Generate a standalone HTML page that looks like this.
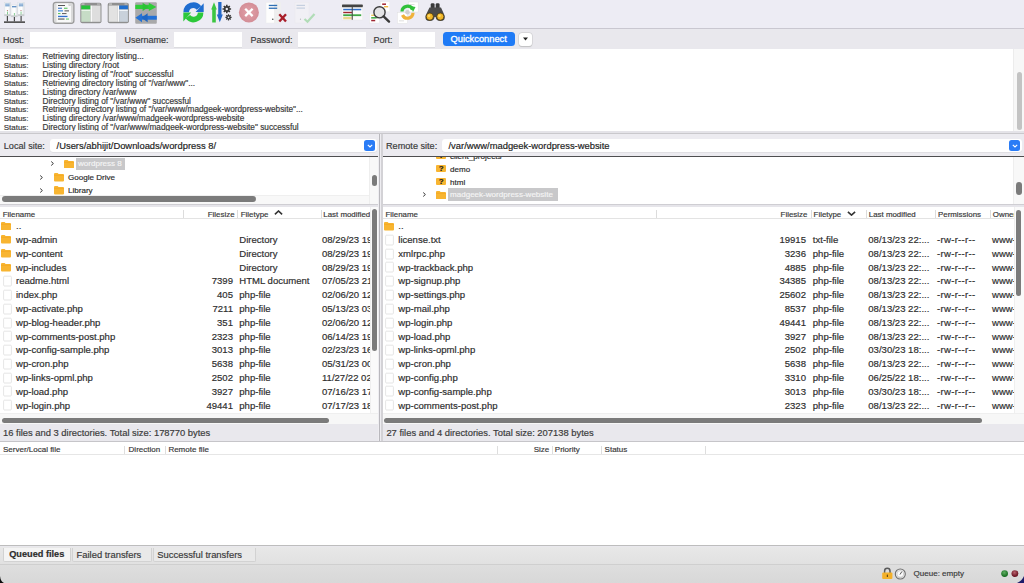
<!DOCTYPE html>
<html><head><meta charset="utf-8"><style>
*{margin:0;padding:0;box-sizing:border-box}
html,body{width:1024px;height:583px;overflow:hidden}
body{position:relative;background:#e9e8ed;font-family:"Liberation Sans",sans-serif;color:#333;}
.ab{position:absolute}
.t{position:absolute;white-space:nowrap;line-height:1;-webkit-text-stroke:.18px currentColor}
.ic{position:absolute}
</style></head><body>

<div class="ab" style="left:0;top:0;width:1024px;height:28px;background:#edecf4"></div>
<div class="ab" style="left:0;top:28px;width:1024px;height:1px;background:#c9c7d0"></div>
<svg class="ic" style="left:0;top:0" width="460" height="28" viewBox="0 0 460 28">
<defs>
<linearGradient id="tw" x1="0" y1="0" x2="1" y2="0"><stop offset="0" stop-color="#f4f6f8"/><stop offset=".6" stop-color="#ffffff"/><stop offset="1" stop-color="#d9dde2"/></linearGradient>
<linearGradient id="gr" x1="0" y1="0" x2="0" y2="1"><stop offset="0" stop-color="#a9a9ab"/><stop offset="1" stop-color="#8b8b8d"/></linearGradient>
<radialGradient id="cx" cx=".5" cy=".5" r=".5"><stop offset="0" stop-color="#e3a2aa"/><stop offset="1" stop-color="#d38d96"/></radialGradient>
</defs>
<!-- 1 site manager -->
<g>
 <rect x="4.2" y="2.5" width="6.4" height="13.5" fill="url(#tw)" stroke="#d5d9de" stroke-width=".4"/>
 <rect x="17.8" y="2.5" width="6.4" height="13.5" fill="url(#tw)" stroke="#d5d9de" stroke-width=".4"/>
 <rect x="11" y="5" width="6.4" height="12" fill="url(#tw)" stroke="#d5d9de" stroke-width=".4"/>
 <rect x="5.2" y="3.6" width="4.4" height="1" fill="#5b8fc5"/><rect x="5.2" y="5.3" width="4.4" height="1" fill="#5b8fc5"/>
 <rect x="18.8" y="3.6" width="4.4" height="1" fill="#5b8fc5"/><rect x="18.8" y="5.3" width="4.4" height="1" fill="#5b8fc5"/>
 <rect x="12" y="6.2" width="4.4" height="1.1" fill="#3f78b8"/>
 <circle cx="7.4" cy="10.5" r=".5" fill="#a05050"/><circle cx="21" cy="10.5" r=".5" fill="#a05050"/>
 <rect x="4.3" y="14.2" width="6.2" height="1.8" fill="#c9cccf"/><rect x="17.9" y="14.2" width="6.2" height="1.8" fill="#c9cccf"/><rect x="11.1" y="15.3" width="6.2" height="1.7" fill="#c9cccf"/>
 <rect x="7" y="11.5" width=".9" height="3" fill="#7cc68a"/><rect x="20.6" y="11.5" width=".9" height="3" fill="#7cc68a"/><rect x="13.9" y="13" width=".9" height="2.5" fill="#7cc68a"/>
 <rect x="6.8" y="16" width="1.2" height="5.5" fill="#4a4a4a"/><rect x="13.8" y="17" width="1.2" height="4.5" fill="#4a4a4a"/><rect x="20.5" y="16" width="1.2" height="5.5" fill="#4a4a4a"/>
 <rect x="4" y="21.3" width="21" height="1.7" fill="#555"/>
</g>
<!-- 2 message log -->
<g>
 <rect x="53.3" y="2.3" width="20.6" height="21" rx="2.5" fill="#dadada" stroke="#9b9b9b" stroke-width="1.3"/>
 <path d="M56.5 3.5H68.5L71 6V22H56.5Z" fill="#f8f8f8"/><path d="M68.5 3.5V6H71Z" fill="#cfcfcf"/>
 <rect x="58" y="5" width="7" height=".9" fill="#444"/>
 <rect x="58" y="7.7" width="4" height="1.1" fill="#3a73c9"/><rect x="64" y="7.7" width="3.5" height="1.1" fill="#58c35b"/>
 <rect x="58" y="10.2" width="5" height="1.3" fill="#4b8fe0"/><rect x="64.5" y="10.2" width="4.5" height="1.3" fill="#777"/>
 <rect x="58" y="13" width="2.5" height="1.1" fill="#5fc65f"/><rect x="62" y="13" width="4.5" height="1.1" fill="#666"/>
 <rect x="58" y="15.8" width="9.5" height="1.3" fill="#2f6fd0"/>
 <rect x="58" y="18.5" width="6.5" height="1.1" fill="#555"/><rect x="66" y="18.5" width="3" height="1.1" fill="#66cc66"/>
</g>
<!-- 3 local tree -->
<g>
 <rect x="80.3" y="2.8" width="21.2" height="20.5" rx="2" fill="#8f8f8f"/>
 <rect x="81.3" y="5.5" width="9.2" height="4" fill="#25c23a"/>
 <rect x="81.3" y="9.5" width="9.2" height="1.5" fill="#e8f3e8"/>
 <rect x="81.3" y="11" width="9.2" height="10.8" fill="#c6dcc6"/>
 <rect x="90.5" y="5.5" width="1.5" height="16.3" fill="#fafafa"/>
 <rect x="92" y="5.5" width="8.5" height="16.3" fill="#dedede"/>
 <rect x="81.5" y="3.6" width="3" height=".9" fill="#ddd"/><rect x="97" y="3.6" width="3" height=".9" fill="#ccc"/>
</g>
<!-- 4 remote tree -->
<g>
 <rect x="107.7" y="2.8" width="21.2" height="20.5" rx="2" fill="#8f8f8f"/>
 <rect x="108.7" y="5.5" width="9" height="16.3" fill="#e2e2e2"/>
 <rect x="117.7" y="5.5" width="1.5" height="16.3" fill="#fafafa"/>
 <rect x="119.2" y="5.5" width="8.7" height="4" fill="#1f6ecf"/>
 <rect x="119.2" y="9.5" width="8.7" height="1.5" fill="#f0f3f7"/>
 <rect x="119.2" y="11" width="8.7" height="10.8" fill="#c9d1db"/>
 <rect x="109" y="3.6" width="3" height=".9" fill="#ddd"/><rect x="124.5" y="3.6" width="3" height=".9" fill="#ccc"/>
</g>
<!-- 5 queue -->
<g>
 <rect x="135.2" y="2.2" width="21.6" height="21.5" rx="1" fill="#a9a9aa"/>
 <rect x="135.3" y="4.8" width="14" height="4.2" fill="#2fcc3a"/>
 <path d="M142.6 2.8L148.8 6.9L142.6 11Z" fill="#2bc236"/>
 <path d="M148.8 2.8L156.4 6.9L148.8 11Z" fill="#2fcc3a"/>
 <rect x="141.5" y="15.8" width="15.3" height="3.9" fill="#2371d6"/>
 <path d="M135.4 17.7L142 13.2V22.2Z" fill="#2371d6"/>
 <path d="M141.5 17.7L147.6 13.2V22.2Z" fill="#1f67c4"/>
</g>
<!-- 6 refresh -->
<g fill="none" stroke-width="5.6">
 <path d="M186.2 12.2A7.1 7.1 0 0 1 199 8" stroke="#1f6dd0"/>
 <path d="M200.6 12.4A7.1 7.1 0 0 1 187.8 16.6" stroke="#2cc83a"/>
</g>
<path d="M203.7 3.2V12H195.6Z" fill="#1f6dd0"/>
<path d="M183.3 21.6V12.6H191.2Z" fill="#2cc83a"/>
<!-- 7 process queue -->
<g>
 <path d="M212.2 22.5V9.5H211.2L214 2.2L216.8 9.5H215.8V22.5Z" fill="#3cc642"/>
 <path d="M218.2 2V14.5H216.8L219.8 22.2L222.8 14.5H221.5V2Z" fill="#2468c8"/>
 <g transform="translate(226.8 9)"><g stroke="#383838" stroke-width="1.6"><path d="M0 -4.3V4.3M-4.3 0H4.3M-3 -3L3 3M-3 3L3 -3"/></g><circle r="2.9" fill="#383838"/><circle r="1.2" fill="#edecf4"/></g>
 <g transform="translate(228.5 17.3)"><g stroke="#383838" stroke-width="1.2"><path d="M0 -3.1V3.1M-3.1 0H3.1M-2.2 -2.2L2.2 2.2M-2.2 2.2L2.2 -2.2"/></g><circle r="2.1" fill="#383838"/><circle r=".9" fill="#edecf4"/></g>
</g>
<!-- 8 cancel -->
<circle cx="248.9" cy="12.4" r="10" fill="url(#cx)"/>
<path d="M245.2 8.7L252.6 16.1M252.6 8.7L245.2 16.1" stroke="#fff" stroke-width="2.3"/>
<!-- 9 disconnect -->
<g>
 <rect x="266" y="2.3" width="14.5" height="20.7" fill="#fdfdfd" stroke="#ececec" stroke-width=".5"/>
 <rect x="274" y="2.3" width="6.5" height="20.7" fill="#eeeeee"/>
 <rect x="268.8" y="4.8" width="8.4" height="1.3" fill="#2f6fb5"/>
 <rect x="268.8" y="7.6" width="8.4" height="1.3" fill="#2f6fb5"/>
 <circle cx="272.8" cy="19.2" r=".7" fill="#333"/>
 <path d="M279.3 14.3L286 21.5M286 14.3L279.3 21.5" stroke="#a81d2a" stroke-width="2.4"/>
</g>
<!-- 10 reconnect disabled -->
<g opacity=".42">
 <rect x="295" y="2.3" width="14" height="20.7" fill="#f7f7f7" stroke="#e5e5e5" stroke-width=".5"/>
 <rect x="296.5" y="4.8" width="8.5" height="1.2" fill="#8fa9c4"/>
 <rect x="296.5" y="7.5" width="8.5" height="1.2" fill="#8fa9c4"/>
 <circle cx="300.5" cy="19.2" r=".6" fill="#666"/>
 <path d="M304.5 19L307.5 21.7L314.5 14" fill="none" stroke="#5fc865" stroke-width="2.2"/>
</g>
<!-- 11 filter -->
<g>
 <rect x="342" y="5" width="20.8" height="15" fill="#fbfbfb" stroke="#e4e4e4" stroke-width=".4"/>
 <rect x="342" y="4.6" width="20.8" height="2.6" rx=".6" fill="#434343"/>
 <rect x="343.2" y="8.8" width="18" height="1.5" fill="#2f6fc9"/>
 <rect x="343.2" y="11.8" width="9" height="1.4" fill="#9e2430"/>
 <rect x="343.2" y="14.3" width="18" height="1.8" fill="#3fa845"/>
 <rect x="343.2" y="16.9" width="8.4" height="2.4" fill="#ead68c"/>
 <rect x="351.7" y="7" width="1.1" height="12.8" fill="#4d4d4d"/>
</g>
<!-- 12 search -->
<g>
 <rect x="380.4" y="1.6" width="9.4" height="10.2" fill="#fff" stroke="#e6e6e6" stroke-width=".4"/>
 <rect x="382.2" y="3.4" width="3.8" height="1.6" fill="#a8303a"/><rect x="384" y="6" width="4.2" height="1.4" fill="#f0b848"/>
 <rect x="369.7" y="13.5" width="9.6" height="9.5" fill="#fff" stroke="#e6e6e6" stroke-width=".4"/>
 <rect x="371.2" y="14.6" width="3.5" height="1.4" fill="#ecc860"/><rect x="371.2" y="17" width="5.5" height="1.6" fill="#46ae4c"/><rect x="371.2" y="19.8" width="4" height="1.5" fill="#9e2632"/>
 <circle cx="379.5" cy="12.3" r="5.6" fill="#e2e2e4" fill-opacity=".9" stroke="#3c3c3c" stroke-width="1.4"/>
 <path d="M383.6 16.4L389 21.6" stroke="#3a3a3a" stroke-width="2.4" stroke-linecap="round"/>
</g>
<!-- 13 compare -->
<g>
 <rect x="408.3" y="2" width="9.9" height="10" fill="#fff" stroke="#e0e0e0" stroke-width=".5"/>
 <rect x="410" y="4.2" width="4.5" height=".8" fill="#d6d6d6"/>
 <rect x="397.3" y="12.5" width="10.2" height="11" fill="#fff" stroke="#e0e0e0" stroke-width=".5"/>
 <rect x="399" y="20.5" width="5" height=".8" fill="#d6d6d6"/>
 <path d="M402 11.5A5.5 5.5 0 0 1 412.5 9.5" fill="none" stroke="#30c03a" stroke-width="3.2"/>
 <path d="M413 12.8A5.5 5.5 0 0 1 402.5 15" fill="none" stroke="#f0b23a" stroke-width="3.2"/>
 <path d="M410.5 6L415.5 7L413 12Z" fill="#30c03a"/>
 <circle cx="407.5" cy="12.3" r="2.2" fill="#cfcfcf"/>
</g>
<!-- 14 binoculars -->
<g>
 <path d="M430.7 4.6Q430.7 3.2 432.2 3.2H433.2Q434.6 3.2 434.6 4.6V9H430.7Z" fill="#3a3a3a"/>
 <path d="M435.7 4.6Q435.7 3.2 437.2 3.2H438.2Q439.6 3.2 439.6 4.6V9H435.7Z" fill="#3a3a3a"/>
 <path d="M429.5 7.5H441L444.6 15.5Q445.8 21 440.3 21Q436 21 435.6 17H434.6Q434.2 21 429.9 21Q424.4 21 425.6 15.5Z" fill="#4a4a4a"/>
 <circle cx="429.8" cy="16.6" r="3.6" fill="#f2b728" stroke="#3a2e10" stroke-width=".7"/>
 <circle cx="440.3" cy="16.6" r="3.6" fill="#f2b728" stroke="#3a2e10" stroke-width=".7"/>
 <circle cx="429" cy="15.7" r="1.3" fill="#fbd86a"/><circle cx="439.5" cy="15.7" r="1.3" fill="#fbd86a"/>
</g>
</svg>

<div class="t" style="left:3px;top:35.5px;font-size:9px;color:#3b3b3b;">Host:</div>
<div class="ab" style="left:30px;top:32px;width:86px;height:15px;background:#fff;box-shadow:0 .5px 0 #cfcfd2"></div>
<div class="t" style="left:124.4px;top:35.5px;font-size:9px;color:#3b3b3b;">Username:</div>
<div class="ab" style="left:174px;top:32px;width:68px;height:15px;background:#fff;box-shadow:0 .5px 0 #cfcfd2"></div>
<div class="t" style="left:250.5px;top:35.5px;font-size:9px;color:#3b3b3b;">Password:</div>
<div class="ab" style="left:298px;top:32px;width:67.5px;height:15px;background:#fff;box-shadow:0 .5px 0 #cfcfd2"></div>
<div class="t" style="left:373.4px;top:35.5px;font-size:9px;color:#3b3b3b;">Port:</div>
<div class="ab" style="left:399px;top:32px;width:36px;height:15px;background:#fff;box-shadow:0 .5px 0 #cfcfd2"></div>
<div class="ab" style="left:443px;top:32.3px;width:72px;height:13.8px;background:#1f7bf6;border-radius:3.5px"></div>
<div class="t" style="left:450.5px;top:34.6px;font-size:9.3px;color:#fff;-webkit-text-stroke:.3px #fff">Quickconnect</div>
<div class="ab" style="left:519.2px;top:32.7px;width:12.8px;height:13.2px;background:#fff;border-radius:3px;box-shadow:0 0 0 .5px #c9c9cc,0 .5px 1px #bbb"></div>
<svg class="ic" style="left:522px;top:37px" width="7" height="4" viewBox="0 0 7 4"><path d="M1 .5H6L3.5 3.5Z" fill="#222"/></svg>
<div class="ab" style="left:0;top:48.5px;width:1013px;height:82px;background:#fff"></div>
<div class="ab" style="left:1013px;top:48.5px;width:11px;height:82px;background:#f7f7f7;border-left:1px solid #ececec"></div>
<div class="ab" style="left:1016.5px;top:72px;width:5.5px;height:57.5px;background:#c3c3c3;border-radius:3px"></div>
<div class="t" style="left:3.7px;top:52.9px;font-size:8.0px;color:#383838;">Status:</div>
<div class="t" style="left:42.5px;top:52.9px;font-size:8.26px;color:#383838;">Retrieving directory listing...</div>
<div class="t" style="left:3.7px;top:61.82px;font-size:8.0px;color:#383838;">Status:</div>
<div class="t" style="left:42.5px;top:61.82px;font-size:8.26px;color:#383838;">Listing directory /root</div>
<div class="t" style="left:3.7px;top:70.74px;font-size:8.0px;color:#383838;">Status:</div>
<div class="t" style="left:42.5px;top:70.74px;font-size:8.26px;color:#383838;">Directory listing of &quot;/root&quot; successful</div>
<div class="t" style="left:3.7px;top:79.66px;font-size:8.0px;color:#383838;">Status:</div>
<div class="t" style="left:42.5px;top:79.66px;font-size:8.26px;color:#383838;">Retrieving directory listing of &quot;/var/www&quot;...</div>
<div class="t" style="left:3.7px;top:88.58px;font-size:8.0px;color:#383838;">Status:</div>
<div class="t" style="left:42.5px;top:88.58px;font-size:8.26px;color:#383838;">Listing directory /var/www</div>
<div class="t" style="left:3.7px;top:97.5px;font-size:8.0px;color:#383838;">Status:</div>
<div class="t" style="left:42.5px;top:97.5px;font-size:8.26px;color:#383838;">Directory listing of &quot;/var/www&quot; successful</div>
<div class="t" style="left:3.7px;top:106.41999999999999px;font-size:8.0px;color:#383838;">Status:</div>
<div class="t" style="left:42.5px;top:106.41999999999999px;font-size:8.26px;color:#383838;">Retrieving directory listing of &quot;/var/www/madgeek-wordpress-website&quot;...</div>
<div class="t" style="left:3.7px;top:115.34px;font-size:8.0px;color:#383838;">Status:</div>
<div class="t" style="left:42.5px;top:115.34px;font-size:8.26px;color:#383838;">Listing directory /var/www/madgeek-wordpress-website</div>
<div class="t" style="left:3.7px;top:124.25999999999999px;font-size:8.0px;color:#383838;">Status:</div>
<div class="t" style="left:42.5px;top:124.25999999999999px;font-size:8.26px;color:#383838;">Directory listing of &quot;/var/www/madgeek-wordpress-website&quot; successful</div>
<div class="ab" style="left:0;top:130.5px;width:1024px;height:3px;background:#e4e3e8"></div>
<div class="ab" style="left:0;top:132.6px;width:1024px;height:1.2px;background:#c9c8cc"></div>
<div class="ab" style="left:0;top:134px;width:1024px;height:22px;background:#ecebf0"></div>
<div class="ab" style="left:0;top:155.6px;width:378px;height:1.3px;background:#4e4e50"></div>
<div class="ab" style="left:383px;top:155.6px;width:641px;height:1.3px;background:#4e4e50"></div>
<div class="t" style="left:3.8px;top:141.8px;font-size:9.15px;color:#3b3b3b;">Local site:</div>
<div class="ab" style="left:50px;top:139.3px;width:327px;height:13px;background:#fff;border-radius:3px;box-shadow:0 .5px 0 #d3d3d6"></div>
<div class="t" style="left:56.6px;top:141.3px;font-size:9.4px;color:#222;">/Users/abhijit/Downloads/wordpress 8/</div>
<div class="ab" style="left:364px;top:140px;width:11px;height:11px;background:#2a7cf6;border-radius:2.5px"></div>
<svg class="ic" style="left:366.5px;top:143.5px" width="6" height="4" viewBox="0 0 6 4"><path d="M.8 .8L3 3L5.2 .8" fill="none" stroke="#fff" stroke-width="1.1"/></svg>
<div class="t" style="left:386px;top:141.8px;font-size:9.15px;color:#3b3b3b;">Remote site:</div>
<div class="ab" style="left:442px;top:139.3px;width:580px;height:13px;background:#fff;border-radius:3px;box-shadow:0 .5px 0 #d3d3d6"></div>
<div class="t" style="left:448.5px;top:141.3px;font-size:9.4px;color:#222;">/var/www/madgeek-wordpress-website</div>
<div class="ab" style="left:1009px;top:140px;width:11px;height:11px;background:#2a7cf6;border-radius:2.5px"></div>
<svg class="ic" style="left:1011.5px;top:143.5px" width="6" height="4" viewBox="0 0 6 4"><path d="M.8 .8L3 3L5.2 .8" fill="none" stroke="#fff" stroke-width="1.1"/></svg>
<div class="ab" style="left:378px;top:133.8px;width:5px;height:307px;background:#eeedf1"></div>
<div class="ab" style="left:378.7px;top:133.8px;width:1.2px;height:307px;background:#b9b8bd"></div>
<div class="ab" style="left:381.2px;top:133.8px;width:1.4px;height:307px;background:#d3d2d6"></div>
<div class="ab" style="left:0;top:157px;width:378px;height:47px;background:#fff;overflow:hidden">
<svg class="ic" style="left:49.8px;top:3.0px" width="5" height="7" viewBox="0 0 5 7"><path d="M1.2 1.5L3.4 3.5L1.2 5.5" fill="none" stroke="#3a3a3a" stroke-width="1"/></svg>
<div class="ab" style="left:64px;top:2.5px"><svg class="ic" style="left:0;top:0" width="10" height="8.6" viewBox="0 0 10 8" preserveAspectRatio="none"><path d="M0 1.2Q0 0 1 0H3.6L4.6 1H9Q10 1 10 2V7Q10 8 9 8H1Q0 8 0 7Z" fill="#f8b531"/><path d="M0 2.2H10" stroke="#f3a61d" stroke-width=".6"/></svg></div>
<div class="ab" style="left:76px;top:0.5px;width:48.5px;height:12px;background:#c8c8ca"></div>
<div class="t" style="left:78px;top:3.1px;font-size:8.05px;color:#f4f4f4">wordpress 8</div>
<svg class="ic" style="left:39.4px;top:16.900000000000006px" width="5" height="7" viewBox="0 0 5 7"><path d="M1.2 1.5L3.4 3.5L1.2 5.5" fill="none" stroke="#3a3a3a" stroke-width="1"/></svg>
<div class="ab" style="left:54px;top:16.400000000000006px"><svg class="ic" style="left:0;top:0" width="10" height="8.6" viewBox="0 0 10 8" preserveAspectRatio="none"><path d="M0 1.2Q0 0 1 0H3.6L4.6 1H9Q10 1 10 2V7Q10 8 9 8H1Q0 8 0 7Z" fill="#f8b531"/><path d="M0 2.2H10" stroke="#f3a61d" stroke-width=".6"/></svg></div>
<div class="t" style="left:68px;top:17.000000000000007px;font-size:8.05px;color:#2e2e2e">Google Drive</div>
<svg class="ic" style="left:39.4px;top:29.69999999999999px" width="5" height="7" viewBox="0 0 5 7"><path d="M1.2 1.5L3.4 3.5L1.2 5.5" fill="none" stroke="#3a3a3a" stroke-width="1"/></svg>
<div class="ab" style="left:54px;top:29.19999999999999px"><svg class="ic" style="left:0;top:0" width="10" height="8.6" viewBox="0 0 10 8" preserveAspectRatio="none"><path d="M0 1.2Q0 0 1 0H3.6L4.6 1H9Q10 1 10 2V7Q10 8 9 8H1Q0 8 0 7Z" fill="#f8b531"/><path d="M0 2.2H10" stroke="#f3a61d" stroke-width=".6"/></svg></div>
<div class="t" style="left:68px;top:29.79999999999999px;font-size:8.05px;color:#2e2e2e">Library</div>
<div class="ab" style="left:368.5px;top:0;width:9.5px;height:47px;background:#f8f8f8;border-left:1px solid #eeeeee"></div>
<div class="ab" style="left:0;top:37.5px;width:368.5px;height:9.5px;background:#f8f8f8;border-top:1px solid #efefef"></div>
<div class="ab" style="left:2px;top:39.30000000000001px;width:254px;height:5.6px;background:#7b7b7b;border-radius:3px"></div>
<div class="ab" style="left:371.5px;top:18px;width:5.5px;height:11px;background:#7b7b7b;border-radius:3px"></div>
</div>
<div class="ab" style="left:383px;top:157px;width:641px;height:47px;background:#fff;overflow:hidden">
<div class="ab" style="left:53px;top:-4.800000000000011px;width:10px;height:7.2px;background:#f8b531;border-radius:1px"></div>
<div class="t" style="left:55.7px;top:-4.900000000000006px;font-size:8px;font-weight:bold;color:#1a1a1a">?</div>
<div class="t" style="left:67px;top:-4.400000000000006px;font-size:8.05px;color:#2e2e2e">client_projects</div>
<div class="ab" style="left:53px;top:8.199999999999989px;width:10px;height:7.2px;background:#f8b531;border-radius:1px"></div>
<div class="t" style="left:55.7px;top:8.099999999999994px;font-size:8px;font-weight:bold;color:#1a1a1a">?</div>
<div class="t" style="left:67px;top:8.599999999999994px;font-size:8.05px;color:#2e2e2e">demo</div>
<div class="ab" style="left:53px;top:21.19999999999999px;width:10px;height:7.2px;background:#f8b531;border-radius:1px"></div>
<div class="t" style="left:55.7px;top:21.099999999999994px;font-size:8px;font-weight:bold;color:#1a1a1a">?</div>
<div class="t" style="left:67px;top:21.599999999999994px;font-size:8.05px;color:#2e2e2e">html</div>
<svg class="ic" style="left:38.80000000000001px;top:34.0px" width="5" height="7" viewBox="0 0 5 7"><path d="M1.2 1.5L3.4 3.5L1.2 5.5" fill="none" stroke="#3a3a3a" stroke-width="1"/></svg>
<div class="ab" style="left:53px;top:33.5px;width:10px;height:8px"><svg class="ic" style="left:0;top:0" width="10" height="8.6" viewBox="0 0 10 8" preserveAspectRatio="none"><path d="M0 1.2Q0 0 1 0H3.6L4.6 1H9Q10 1 10 2V7Q10 8 9 8H1Q0 8 0 7Z" fill="#f8b531"/><path d="M0 2.2H10" stroke="#f3a61d" stroke-width=".6"/></svg></div>
<div class="ab" style="left:65px;top:31.0px;width:109.7px;height:13px;background:#c8c8ca"></div>
<div class="t" style="left:67px;top:34.099999999999994px;font-size:8.05px;color:#f4f4f4">madgeek-wordpress-website</div>
<div class="ab" style="left:53px;top:46.599999999999994px;width:10px;height:8px"><svg class="ic" style="left:0;top:0" width="10" height="8.6" viewBox="0 0 10 8" preserveAspectRatio="none"><path d="M0 1.2Q0 0 1 0H3.6L4.6 1H9Q10 1 10 2V7Q10 8 9 8H1Q0 8 0 7Z" fill="#f8b531"/><path d="M0 2.2H10" stroke="#f3a61d" stroke-width=".6"/></svg></div>
<div class="t" style="left:67px;top:47.19999999999999px;font-size:8.05px;color:#2e2e2e"></div>
<div class="ab" style="left:630px;top:0;width:11px;height:47px;background:#f8f8f8;border-left:1px solid #eeeeee"></div>
<div class="ab" style="left:633.4px;top:25px;width:5.4px;height:12.6px;background:#7b7b7b;border-radius:3px"></div>
</div>
<div class="ab" style="left:0;top:204px;width:378px;height:3.2px;background:#e6e5ea;border-top:1px solid #cfced3"></div>
<div class="ab" style="left:383px;top:204px;width:641px;height:3.2px;background:#e6e5ea;border-top:1px solid #cfced3"></div>
<div class="ab" style="left:0;top:219px;width:378px;height:194px;background:#fff"></div>
<div class="ab" style="left:0px;top:207.2px;width:378px;height:11.6px;background:#fff;border-bottom:1px solid #e3e3e3"></div>
<div class="t" style="left:2.7px;top:210.7px;font-size:7.9px;color:#383838;">Filename</div>
<div class="ab" style="left:182.5px;top:209.5px;width:1px;height:8px;background:#dcdcdc"></div>
<div class="t" style="left:207.8px;top:210.7px;font-size:7.9px;color:#383838;">Filesize</div>
<div class="ab" style="left:237.3px;top:209.5px;width:1px;height:8px;background:#dcdcdc"></div>
<div class="t" style="left:240.8px;top:210.7px;font-size:7.9px;color:#383838;">Filetype</div>
<svg class="ic" style="left:274px;top:210.2px" width="9" height="5" viewBox="0 0 9 5"><path d="M.9 4.3L4.5 1L8.1 4.3" fill="none" stroke="#333" stroke-width="1.6"/></svg>
<div class="ab" style="left:320.5px;top:209.5px;width:1px;height:8px;background:#dcdcdc"></div>
<div class="t" style="left:323.3px;top:210.7px;font-size:7.9px;color:#383838;">Last modified</div>
<div class="ab" style="left:0;top:219px;width:369.5px;height:194px;overflow:hidden">
<div class="ab" style="left:1.2px;top:2.5999999999999996px;width:10px;height:8px"><svg class="ic" style="left:0;top:0" width="10" height="8.6" viewBox="0 0 10 8" preserveAspectRatio="none"><path d="M0 1.2Q0 0 1 0H3.6L4.6 1H9Q10 1 10 2V7Q10 8 9 8H1Q0 8 0 7Z" fill="#f8b531"/><path d="M0 2.2H10" stroke="#f3a61d" stroke-width=".6"/></svg></div>
<div class="t" style="left:16px;top:2.3px;font-size:9.55px;color:#2e2e2e">..</div>
<div class="ab" style="left:1.2px;top:16.389999999999993px;width:10px;height:8px"><svg class="ic" style="left:0;top:0" width="10" height="8.6" viewBox="0 0 10 8" preserveAspectRatio="none"><path d="M0 1.2Q0 0 1 0H3.6L4.6 1H9Q10 1 10 2V7Q10 8 9 8H1Q0 8 0 7Z" fill="#f8b531"/><path d="M0 2.2H10" stroke="#f3a61d" stroke-width=".6"/></svg></div>
<div class="t" style="left:16px;top:16.089999999999993px;font-size:9.55px;color:#2e2e2e">wp-admin</div>
<div class="t" style="left:239.3px;top:16.089999999999993px;font-size:9.55px;color:#2e2e2e">Directory</div>
<div class="t" style="left:322px;top:16.089999999999993px;font-size:9.55px;color:#2e2e2e">08/29/23 19:05</div>
<div class="ab" style="left:1.2px;top:30.179999999999986px;width:10px;height:8px"><svg class="ic" style="left:0;top:0" width="10" height="8.6" viewBox="0 0 10 8" preserveAspectRatio="none"><path d="M0 1.2Q0 0 1 0H3.6L4.6 1H9Q10 1 10 2V7Q10 8 9 8H1Q0 8 0 7Z" fill="#f8b531"/><path d="M0 2.2H10" stroke="#f3a61d" stroke-width=".6"/></svg></div>
<div class="t" style="left:16px;top:29.879999999999985px;font-size:9.55px;color:#2e2e2e">wp-content</div>
<div class="t" style="left:239.3px;top:29.879999999999985px;font-size:9.55px;color:#2e2e2e">Directory</div>
<div class="t" style="left:322px;top:29.879999999999985px;font-size:9.55px;color:#2e2e2e">08/29/23 19:05</div>
<div class="ab" style="left:1.2px;top:43.970000000000006px;width:10px;height:8px"><svg class="ic" style="left:0;top:0" width="10" height="8.6" viewBox="0 0 10 8" preserveAspectRatio="none"><path d="M0 1.2Q0 0 1 0H3.6L4.6 1H9Q10 1 10 2V7Q10 8 9 8H1Q0 8 0 7Z" fill="#f8b531"/><path d="M0 2.2H10" stroke="#f3a61d" stroke-width=".6"/></svg></div>
<div class="t" style="left:16px;top:43.67px;font-size:9.55px;color:#2e2e2e">wp-includes</div>
<div class="t" style="left:239.3px;top:43.67px;font-size:9.55px;color:#2e2e2e">Directory</div>
<div class="t" style="left:322px;top:43.67px;font-size:9.55px;color:#2e2e2e">08/29/23 19:05</div>
<div class="ab" style="left:2.5px;top:56.15999999999997px;width:9px;height:12px"><svg class="ic" style="left:0;top:0" width="9" height="12" viewBox="0 0 9 12"><rect x=".6" y="1.2" width="7.8" height="9.8" rx="1" fill="#fff" stroke="#dedede" stroke-width=".8"/></svg></div>
<div class="t" style="left:16px;top:57.459999999999965px;font-size:9.55px;color:#2e2e2e">readme.html</div>
<div class="t" style="right:136.5px;top:57.459999999999965px;font-size:9.55px;color:#2e2e2e">7399</div>
<div class="t" style="left:239.3px;top:57.459999999999965px;font-size:9.55px;color:#2e2e2e">HTML document</div>
<div class="t" style="left:322px;top:57.459999999999965px;font-size:9.55px;color:#2e2e2e">07/05/23 21:44</div>
<div class="ab" style="left:2.5px;top:69.94999999999999px;width:9px;height:12px"><svg class="ic" style="left:0;top:0" width="9" height="12" viewBox="0 0 9 12"><rect x=".6" y="1.2" width="7.8" height="9.8" rx="1" fill="#fff" stroke="#dedede" stroke-width=".8"/></svg></div>
<div class="t" style="left:16px;top:71.24999999999999px;font-size:9.55px;color:#2e2e2e">index.php</div>
<div class="t" style="right:136.5px;top:71.24999999999999px;font-size:9.55px;color:#2e2e2e">405</div>
<div class="t" style="left:239.3px;top:71.24999999999999px;font-size:9.55px;color:#2e2e2e">php-file</div>
<div class="t" style="left:322px;top:71.24999999999999px;font-size:9.55px;color:#2e2e2e">02/06/20 12:03</div>
<div class="ab" style="left:2.5px;top:83.74000000000001px;width:9px;height:12px"><svg class="ic" style="left:0;top:0" width="9" height="12" viewBox="0 0 9 12"><rect x=".6" y="1.2" width="7.8" height="9.8" rx="1" fill="#fff" stroke="#dedede" stroke-width=".8"/></svg></div>
<div class="t" style="left:16px;top:85.04px;font-size:9.55px;color:#2e2e2e">wp-activate.php</div>
<div class="t" style="right:136.5px;top:85.04px;font-size:9.55px;color:#2e2e2e">7211</div>
<div class="t" style="left:239.3px;top:85.04px;font-size:9.55px;color:#2e2e2e">php-file</div>
<div class="t" style="left:322px;top:85.04px;font-size:9.55px;color:#2e2e2e">05/13/23 03:05</div>
<div class="ab" style="left:2.5px;top:97.52999999999997px;width:9px;height:12px"><svg class="ic" style="left:0;top:0" width="9" height="12" viewBox="0 0 9 12"><rect x=".6" y="1.2" width="7.8" height="9.8" rx="1" fill="#fff" stroke="#dedede" stroke-width=".8"/></svg></div>
<div class="t" style="left:16px;top:98.82999999999997px;font-size:9.55px;color:#2e2e2e">wp-blog-header.php</div>
<div class="t" style="right:136.5px;top:98.82999999999997px;font-size:9.55px;color:#2e2e2e">351</div>
<div class="t" style="left:239.3px;top:98.82999999999997px;font-size:9.55px;color:#2e2e2e">php-file</div>
<div class="t" style="left:322px;top:98.82999999999997px;font-size:9.55px;color:#2e2e2e">02/06/20 12:03</div>
<div class="ab" style="left:2.5px;top:111.32px;width:9px;height:12px"><svg class="ic" style="left:0;top:0" width="9" height="12" viewBox="0 0 9 12"><rect x=".6" y="1.2" width="7.8" height="9.8" rx="1" fill="#fff" stroke="#dedede" stroke-width=".8"/></svg></div>
<div class="t" style="left:16px;top:112.61999999999999px;font-size:9.55px;color:#2e2e2e">wp-comments-post.php</div>
<div class="t" style="right:136.5px;top:112.61999999999999px;font-size:9.55px;color:#2e2e2e">2323</div>
<div class="t" style="left:239.3px;top:112.61999999999999px;font-size:9.55px;color:#2e2e2e">php-file</div>
<div class="t" style="left:322px;top:112.61999999999999px;font-size:9.55px;color:#2e2e2e">06/14/23 19:05</div>
<div class="ab" style="left:2.5px;top:125.11000000000001px;width:9px;height:12px"><svg class="ic" style="left:0;top:0" width="9" height="12" viewBox="0 0 9 12"><rect x=".6" y="1.2" width="7.8" height="9.8" rx="1" fill="#fff" stroke="#dedede" stroke-width=".8"/></svg></div>
<div class="t" style="left:16px;top:126.41000000000001px;font-size:9.55px;color:#2e2e2e">wp-config-sample.php</div>
<div class="t" style="right:136.5px;top:126.41000000000001px;font-size:9.55px;color:#2e2e2e">3013</div>
<div class="t" style="left:239.3px;top:126.41000000000001px;font-size:9.55px;color:#2e2e2e">php-file</div>
<div class="t" style="left:322px;top:126.41000000000001px;font-size:9.55px;color:#2e2e2e">02/23/23 16:05</div>
<div class="ab" style="left:2.5px;top:138.89999999999998px;width:9px;height:12px"><svg class="ic" style="left:0;top:0" width="9" height="12" viewBox="0 0 9 12"><rect x=".6" y="1.2" width="7.8" height="9.8" rx="1" fill="#fff" stroke="#dedede" stroke-width=".8"/></svg></div>
<div class="t" style="left:16px;top:140.2px;font-size:9.55px;color:#2e2e2e">wp-cron.php</div>
<div class="t" style="right:136.5px;top:140.2px;font-size:9.55px;color:#2e2e2e">5638</div>
<div class="t" style="left:239.3px;top:140.2px;font-size:9.55px;color:#2e2e2e">php-file</div>
<div class="t" style="left:322px;top:140.2px;font-size:9.55px;color:#2e2e2e">05/31/23 00:05</div>
<div class="ab" style="left:2.5px;top:152.69px;width:9px;height:12px"><svg class="ic" style="left:0;top:0" width="9" height="12" viewBox="0 0 9 12"><rect x=".6" y="1.2" width="7.8" height="9.8" rx="1" fill="#fff" stroke="#dedede" stroke-width=".8"/></svg></div>
<div class="t" style="left:16px;top:153.99px;font-size:9.55px;color:#2e2e2e">wp-links-opml.php</div>
<div class="t" style="right:136.5px;top:153.99px;font-size:9.55px;color:#2e2e2e">2502</div>
<div class="t" style="left:239.3px;top:153.99px;font-size:9.55px;color:#2e2e2e">php-file</div>
<div class="t" style="left:322px;top:153.99px;font-size:9.55px;color:#2e2e2e">11/27/22 02:05</div>
<div class="ab" style="left:2.5px;top:166.48000000000002px;width:9px;height:12px"><svg class="ic" style="left:0;top:0" width="9" height="12" viewBox="0 0 9 12"><rect x=".6" y="1.2" width="7.8" height="9.8" rx="1" fill="#fff" stroke="#dedede" stroke-width=".8"/></svg></div>
<div class="t" style="left:16px;top:167.78000000000003px;font-size:9.55px;color:#2e2e2e">wp-load.php</div>
<div class="t" style="right:136.5px;top:167.78000000000003px;font-size:9.55px;color:#2e2e2e">3927</div>
<div class="t" style="left:239.3px;top:167.78000000000003px;font-size:9.55px;color:#2e2e2e">php-file</div>
<div class="t" style="left:322px;top:167.78000000000003px;font-size:9.55px;color:#2e2e2e">07/16/23 17:05</div>
<div class="ab" style="left:2.5px;top:180.26999999999998px;width:9px;height:12px"><svg class="ic" style="left:0;top:0" width="9" height="12" viewBox="0 0 9 12"><rect x=".6" y="1.2" width="7.8" height="9.8" rx="1" fill="#fff" stroke="#dedede" stroke-width=".8"/></svg></div>
<div class="t" style="left:16px;top:181.57px;font-size:9.55px;color:#2e2e2e">wp-login.php</div>
<div class="t" style="right:136.5px;top:181.57px;font-size:9.55px;color:#2e2e2e">49441</div>
<div class="t" style="left:239.3px;top:181.57px;font-size:9.55px;color:#2e2e2e">php-file</div>
<div class="t" style="left:322px;top:181.57px;font-size:9.55px;color:#2e2e2e">07/17/23 18:05</div>
</div>
<div class="ab" style="left:369.5px;top:207.2px;width:8.5px;height:206px;background:#fafafa;border-left:1px solid #efefef"></div>
<div class="ab" style="left:371.6px;top:209.4px;width:5.3px;height:142px;background:#7b7b7b;border-radius:3px"></div>
<div class="ab" style="left:0;top:413px;width:378px;height:11px;background:#f7f7f7;border-top:1px solid #efefef"></div>
<div class="ab" style="left:2px;top:418px;width:327px;height:4.8px;background:#7b7b7b;border-radius:3px"></div>
<div class="ab" style="left:383px;top:219px;width:641px;height:194px;background:#fff"></div>
<div class="ab" style="left:383px;top:207.2px;width:641px;height:11.6px;background:#fff;border-bottom:1px solid #e3e3e3"></div>
<div class="t" style="left:385.5px;top:210.7px;font-size:7.9px;color:#383838;">Filename</div>
<div class="ab" style="left:655.5px;top:209.5px;width:1px;height:8px;background:#dcdcdc"></div>
<div class="t" style="left:780.6px;top:210.7px;font-size:7.9px;color:#383838;">Filesize</div>
<div class="ab" style="left:810.8px;top:209.5px;width:1px;height:8px;background:#dcdcdc"></div>
<div class="t" style="left:813.6px;top:210.7px;font-size:7.9px;color:#383838;">Filetype</div>
<svg class="ic" style="left:847px;top:210.8px" width="9" height="5" viewBox="0 0 9 5"><path d="M.9 .9L4.5 4.1L8.1 .9" fill="none" stroke="#333" stroke-width="1.6"/></svg>
<div class="ab" style="left:865.5px;top:209.5px;width:1px;height:8px;background:#dcdcdc"></div>
<div class="t" style="left:868.8px;top:210.7px;font-size:7.9px;color:#383838;">Last modified</div>
<div class="ab" style="left:935.3px;top:209.5px;width:1px;height:8px;background:#dcdcdc"></div>
<div class="t" style="left:938px;top:210.7px;font-size:7.9px;color:#383838;">Permissions</div>
<div class="ab" style="left:989.5px;top:209.5px;width:1px;height:8px;background:#dcdcdc"></div>
<div class="t" style="left:992.8px;top:210.7px;font-size:7.9px;color:#383838;">Owner</div>
<div class="ab" style="left:383px;top:207.2px;width:631px;height:206px;overflow:hidden"><div class="ab" style="left:0;top:11.8px;width:631px;height:194px">
<div class="ab" style="left:1px;top:3.0px;width:10px;height:8px"><svg class="ic" style="left:0;top:0" width="10" height="8.6" viewBox="0 0 10 8" preserveAspectRatio="none"><path d="M0 1.2Q0 0 1 0H3.6L4.6 1H9Q10 1 10 2V7Q10 8 9 8H1Q0 8 0 7Z" fill="#f8b531"/><path d="M0 2.2H10" stroke="#f3a61d" stroke-width=".6"/></svg></div>
<div class="t" style="left:15.300000000000011px;top:2.3px;font-size:9.55px;color:#2e2e2e">..</div>
<div class="ab" style="left:2px;top:14.789999999999992px;width:9px;height:12px"><svg class="ic" style="left:0;top:0" width="9" height="12" viewBox="0 0 9 12"><rect x=".6" y="1.2" width="7.8" height="9.8" rx="1" fill="#fff" stroke="#dedede" stroke-width=".8"/></svg></div>
<div class="t" style="left:15.300000000000011px;top:16.089999999999993px;font-size:9.55px;color:#2e2e2e">license.txt</div>
<div class="t" style="right:208px;top:16.089999999999993px;font-size:9.55px;color:#2e2e2e">19915</div>
<div class="t" style="left:429.79999999999995px;top:16.089999999999993px;font-size:9.55px;color:#2e2e2e">txt-file</div>
<div class="t" style="left:485.29999999999995px;top:16.089999999999993px;font-size:9.55px;color:#2e2e2e">08/13/23 22:...</div>
<div class="t" style="left:554px;top:16.089999999999993px;font-size:9.55px;color:#2e2e2e;letter-spacing:.3px">-rw-r--r--</div>
<div class="t" style="left:609px;top:16.089999999999993px;font-size:9.55px;color:#2e2e2e">www-data</div>
<div class="ab" style="left:2px;top:28.579999999999984px;width:9px;height:12px"><svg class="ic" style="left:0;top:0" width="9" height="12" viewBox="0 0 9 12"><rect x=".6" y="1.2" width="7.8" height="9.8" rx="1" fill="#fff" stroke="#dedede" stroke-width=".8"/></svg></div>
<div class="t" style="left:15.300000000000011px;top:29.879999999999985px;font-size:9.55px;color:#2e2e2e">xmlrpc.php</div>
<div class="t" style="right:208px;top:29.879999999999985px;font-size:9.55px;color:#2e2e2e">3236</div>
<div class="t" style="left:429.79999999999995px;top:29.879999999999985px;font-size:9.55px;color:#2e2e2e">php-file</div>
<div class="t" style="left:485.29999999999995px;top:29.879999999999985px;font-size:9.55px;color:#2e2e2e">08/13/23 22:...</div>
<div class="t" style="left:554px;top:29.879999999999985px;font-size:9.55px;color:#2e2e2e;letter-spacing:.3px">-rw-r--r--</div>
<div class="t" style="left:609px;top:29.879999999999985px;font-size:9.55px;color:#2e2e2e">www-data</div>
<div class="ab" style="left:2px;top:42.370000000000005px;width:9px;height:12px"><svg class="ic" style="left:0;top:0" width="9" height="12" viewBox="0 0 9 12"><rect x=".6" y="1.2" width="7.8" height="9.8" rx="1" fill="#fff" stroke="#dedede" stroke-width=".8"/></svg></div>
<div class="t" style="left:15.300000000000011px;top:43.67px;font-size:9.55px;color:#2e2e2e">wp-trackback.php</div>
<div class="t" style="right:208px;top:43.67px;font-size:9.55px;color:#2e2e2e">4885</div>
<div class="t" style="left:429.79999999999995px;top:43.67px;font-size:9.55px;color:#2e2e2e">php-file</div>
<div class="t" style="left:485.29999999999995px;top:43.67px;font-size:9.55px;color:#2e2e2e">08/13/23 22:...</div>
<div class="t" style="left:554px;top:43.67px;font-size:9.55px;color:#2e2e2e;letter-spacing:.3px">-rw-r--r--</div>
<div class="t" style="left:609px;top:43.67px;font-size:9.55px;color:#2e2e2e">www-data</div>
<div class="ab" style="left:2px;top:56.15999999999997px;width:9px;height:12px"><svg class="ic" style="left:0;top:0" width="9" height="12" viewBox="0 0 9 12"><rect x=".6" y="1.2" width="7.8" height="9.8" rx="1" fill="#fff" stroke="#dedede" stroke-width=".8"/></svg></div>
<div class="t" style="left:15.300000000000011px;top:57.459999999999965px;font-size:9.55px;color:#2e2e2e">wp-signup.php</div>
<div class="t" style="right:208px;top:57.459999999999965px;font-size:9.55px;color:#2e2e2e">34385</div>
<div class="t" style="left:429.79999999999995px;top:57.459999999999965px;font-size:9.55px;color:#2e2e2e">php-file</div>
<div class="t" style="left:485.29999999999995px;top:57.459999999999965px;font-size:9.55px;color:#2e2e2e">08/13/23 22:...</div>
<div class="t" style="left:554px;top:57.459999999999965px;font-size:9.55px;color:#2e2e2e;letter-spacing:.3px">-rw-r--r--</div>
<div class="t" style="left:609px;top:57.459999999999965px;font-size:9.55px;color:#2e2e2e">www-data</div>
<div class="ab" style="left:2px;top:69.94999999999999px;width:9px;height:12px"><svg class="ic" style="left:0;top:0" width="9" height="12" viewBox="0 0 9 12"><rect x=".6" y="1.2" width="7.8" height="9.8" rx="1" fill="#fff" stroke="#dedede" stroke-width=".8"/></svg></div>
<div class="t" style="left:15.300000000000011px;top:71.24999999999999px;font-size:9.55px;color:#2e2e2e">wp-settings.php</div>
<div class="t" style="right:208px;top:71.24999999999999px;font-size:9.55px;color:#2e2e2e">25602</div>
<div class="t" style="left:429.79999999999995px;top:71.24999999999999px;font-size:9.55px;color:#2e2e2e">php-file</div>
<div class="t" style="left:485.29999999999995px;top:71.24999999999999px;font-size:9.55px;color:#2e2e2e">08/13/23 22:...</div>
<div class="t" style="left:554px;top:71.24999999999999px;font-size:9.55px;color:#2e2e2e;letter-spacing:.3px">-rw-r--r--</div>
<div class="t" style="left:609px;top:71.24999999999999px;font-size:9.55px;color:#2e2e2e">www-data</div>
<div class="ab" style="left:2px;top:83.74000000000001px;width:9px;height:12px"><svg class="ic" style="left:0;top:0" width="9" height="12" viewBox="0 0 9 12"><rect x=".6" y="1.2" width="7.8" height="9.8" rx="1" fill="#fff" stroke="#dedede" stroke-width=".8"/></svg></div>
<div class="t" style="left:15.300000000000011px;top:85.04px;font-size:9.55px;color:#2e2e2e">wp-mail.php</div>
<div class="t" style="right:208px;top:85.04px;font-size:9.55px;color:#2e2e2e">8537</div>
<div class="t" style="left:429.79999999999995px;top:85.04px;font-size:9.55px;color:#2e2e2e">php-file</div>
<div class="t" style="left:485.29999999999995px;top:85.04px;font-size:9.55px;color:#2e2e2e">08/13/23 22:...</div>
<div class="t" style="left:554px;top:85.04px;font-size:9.55px;color:#2e2e2e;letter-spacing:.3px">-rw-r--r--</div>
<div class="t" style="left:609px;top:85.04px;font-size:9.55px;color:#2e2e2e">www-data</div>
<div class="ab" style="left:2px;top:97.52999999999997px;width:9px;height:12px"><svg class="ic" style="left:0;top:0" width="9" height="12" viewBox="0 0 9 12"><rect x=".6" y="1.2" width="7.8" height="9.8" rx="1" fill="#fff" stroke="#dedede" stroke-width=".8"/></svg></div>
<div class="t" style="left:15.300000000000011px;top:98.82999999999997px;font-size:9.55px;color:#2e2e2e">wp-login.php</div>
<div class="t" style="right:208px;top:98.82999999999997px;font-size:9.55px;color:#2e2e2e">49441</div>
<div class="t" style="left:429.79999999999995px;top:98.82999999999997px;font-size:9.55px;color:#2e2e2e">php-file</div>
<div class="t" style="left:485.29999999999995px;top:98.82999999999997px;font-size:9.55px;color:#2e2e2e">08/13/23 22:...</div>
<div class="t" style="left:554px;top:98.82999999999997px;font-size:9.55px;color:#2e2e2e;letter-spacing:.3px">-rw-r--r--</div>
<div class="t" style="left:609px;top:98.82999999999997px;font-size:9.55px;color:#2e2e2e">www-data</div>
<div class="ab" style="left:2px;top:111.32px;width:9px;height:12px"><svg class="ic" style="left:0;top:0" width="9" height="12" viewBox="0 0 9 12"><rect x=".6" y="1.2" width="7.8" height="9.8" rx="1" fill="#fff" stroke="#dedede" stroke-width=".8"/></svg></div>
<div class="t" style="left:15.300000000000011px;top:112.61999999999999px;font-size:9.55px;color:#2e2e2e">wp-load.php</div>
<div class="t" style="right:208px;top:112.61999999999999px;font-size:9.55px;color:#2e2e2e">3927</div>
<div class="t" style="left:429.79999999999995px;top:112.61999999999999px;font-size:9.55px;color:#2e2e2e">php-file</div>
<div class="t" style="left:485.29999999999995px;top:112.61999999999999px;font-size:9.55px;color:#2e2e2e">08/13/23 22:...</div>
<div class="t" style="left:554px;top:112.61999999999999px;font-size:9.55px;color:#2e2e2e;letter-spacing:.3px">-rw-r--r--</div>
<div class="t" style="left:609px;top:112.61999999999999px;font-size:9.55px;color:#2e2e2e">www-data</div>
<div class="ab" style="left:2px;top:125.11000000000001px;width:9px;height:12px"><svg class="ic" style="left:0;top:0" width="9" height="12" viewBox="0 0 9 12"><rect x=".6" y="1.2" width="7.8" height="9.8" rx="1" fill="#fff" stroke="#dedede" stroke-width=".8"/></svg></div>
<div class="t" style="left:15.300000000000011px;top:126.41000000000001px;font-size:9.55px;color:#2e2e2e">wp-links-opml.php</div>
<div class="t" style="right:208px;top:126.41000000000001px;font-size:9.55px;color:#2e2e2e">2502</div>
<div class="t" style="left:429.79999999999995px;top:126.41000000000001px;font-size:9.55px;color:#2e2e2e">php-file</div>
<div class="t" style="left:485.29999999999995px;top:126.41000000000001px;font-size:9.55px;color:#2e2e2e">03/30/23 18:...</div>
<div class="t" style="left:554px;top:126.41000000000001px;font-size:9.55px;color:#2e2e2e;letter-spacing:.3px">-rw-r--r--</div>
<div class="t" style="left:609px;top:126.41000000000001px;font-size:9.55px;color:#2e2e2e">www-data</div>
<div class="ab" style="left:2px;top:138.89999999999998px;width:9px;height:12px"><svg class="ic" style="left:0;top:0" width="9" height="12" viewBox="0 0 9 12"><rect x=".6" y="1.2" width="7.8" height="9.8" rx="1" fill="#fff" stroke="#dedede" stroke-width=".8"/></svg></div>
<div class="t" style="left:15.300000000000011px;top:140.2px;font-size:9.55px;color:#2e2e2e">wp-cron.php</div>
<div class="t" style="right:208px;top:140.2px;font-size:9.55px;color:#2e2e2e">5638</div>
<div class="t" style="left:429.79999999999995px;top:140.2px;font-size:9.55px;color:#2e2e2e">php-file</div>
<div class="t" style="left:485.29999999999995px;top:140.2px;font-size:9.55px;color:#2e2e2e">08/13/23 22:...</div>
<div class="t" style="left:554px;top:140.2px;font-size:9.55px;color:#2e2e2e;letter-spacing:.3px">-rw-r--r--</div>
<div class="t" style="left:609px;top:140.2px;font-size:9.55px;color:#2e2e2e">www-data</div>
<div class="ab" style="left:2px;top:152.69px;width:9px;height:12px"><svg class="ic" style="left:0;top:0" width="9" height="12" viewBox="0 0 9 12"><rect x=".6" y="1.2" width="7.8" height="9.8" rx="1" fill="#fff" stroke="#dedede" stroke-width=".8"/></svg></div>
<div class="t" style="left:15.300000000000011px;top:153.99px;font-size:9.55px;color:#2e2e2e">wp-config.php</div>
<div class="t" style="right:208px;top:153.99px;font-size:9.55px;color:#2e2e2e">3310</div>
<div class="t" style="left:429.79999999999995px;top:153.99px;font-size:9.55px;color:#2e2e2e">php-file</div>
<div class="t" style="left:485.29999999999995px;top:153.99px;font-size:9.55px;color:#2e2e2e">06/25/22 18:...</div>
<div class="t" style="left:554px;top:153.99px;font-size:9.55px;color:#2e2e2e;letter-spacing:.3px">-rw-r--r--</div>
<div class="t" style="left:609px;top:153.99px;font-size:9.55px;color:#2e2e2e">www-data</div>
<div class="ab" style="left:2px;top:166.48000000000002px;width:9px;height:12px"><svg class="ic" style="left:0;top:0" width="9" height="12" viewBox="0 0 9 12"><rect x=".6" y="1.2" width="7.8" height="9.8" rx="1" fill="#fff" stroke="#dedede" stroke-width=".8"/></svg></div>
<div class="t" style="left:15.300000000000011px;top:167.78000000000003px;font-size:9.55px;color:#2e2e2e">wp-config-sample.php</div>
<div class="t" style="right:208px;top:167.78000000000003px;font-size:9.55px;color:#2e2e2e">3013</div>
<div class="t" style="left:429.79999999999995px;top:167.78000000000003px;font-size:9.55px;color:#2e2e2e">php-file</div>
<div class="t" style="left:485.29999999999995px;top:167.78000000000003px;font-size:9.55px;color:#2e2e2e">03/30/23 18:...</div>
<div class="t" style="left:554px;top:167.78000000000003px;font-size:9.55px;color:#2e2e2e;letter-spacing:.3px">-rw-r--r--</div>
<div class="t" style="left:609px;top:167.78000000000003px;font-size:9.55px;color:#2e2e2e">www-data</div>
<div class="ab" style="left:2px;top:180.26999999999998px;width:9px;height:12px"><svg class="ic" style="left:0;top:0" width="9" height="12" viewBox="0 0 9 12"><rect x=".6" y="1.2" width="7.8" height="9.8" rx="1" fill="#fff" stroke="#dedede" stroke-width=".8"/></svg></div>
<div class="t" style="left:15.300000000000011px;top:181.57px;font-size:9.55px;color:#2e2e2e">wp-comments-post.php</div>
<div class="t" style="right:208px;top:181.57px;font-size:9.55px;color:#2e2e2e">2323</div>
<div class="t" style="left:429.79999999999995px;top:181.57px;font-size:9.55px;color:#2e2e2e">php-file</div>
<div class="t" style="left:485.29999999999995px;top:181.57px;font-size:9.55px;color:#2e2e2e">08/13/23 22:...</div>
<div class="t" style="left:554px;top:181.57px;font-size:9.55px;color:#2e2e2e;letter-spacing:.3px">-rw-r--r--</div>
<div class="t" style="left:609px;top:181.57px;font-size:9.55px;color:#2e2e2e">www-data</div>
</div></div>
<div class="ab" style="left:1014px;top:207.2px;width:10px;height:206px;background:#fafafa;border-left:1px solid #efefef"></div>
<div class="ab" style="left:1015.8px;top:210.3px;width:5.3px;height:85.5px;background:#7b7b7b;border-radius:3px"></div>
<div class="ab" style="left:383px;top:413px;width:641px;height:11px;background:#f7f7f7;border-top:1px solid #efefef"></div>
<div class="ab" style="left:384.4px;top:418px;width:598px;height:4.8px;background:#7b7b7b;border-radius:3px"></div>
<div class="t" style="left:3px;top:428px;font-size:9.39px;color:#3b3b3b;">16 files and 3 directories. Total size: 178770 bytes</div>
<div class="t" style="left:386.4px;top:428px;font-size:9.39px;color:#3b3b3b;">27 files and 4 directories. Total size: 207138 bytes</div>
<div class="ab" style="left:0;top:440.6px;width:1024px;height:1.3px;background:#c6c5c9"></div>
<div class="ab" style="left:0;top:442px;width:1024px;height:103.5px;background:#fff"></div>
<div class="ab" style="left:0;top:454px;width:1024px;height:1px;background:#e6e6e6"></div>
<div class="t" style="left:3px;top:445.8px;font-size:8.0px;color:#383838;">Server/Local file</div>
<div class="ab" style="left:124.2px;top:445.5px;width:1px;height:8px;background:#dedede"></div>
<div class="t" style="left:128.6px;top:445.8px;font-size:8.0px;color:#383838;">Direction</div>
<div class="ab" style="left:165px;top:445.5px;width:1px;height:8px;background:#dedede"></div>
<div class="t" style="left:168.4px;top:445.8px;font-size:8.0px;color:#383838;">Remote file</div>
<div class="ab" style="left:496.8px;top:445.5px;width:1px;height:8px;background:#dedede"></div>
<div class="t" style="left:533.7px;top:445.8px;font-size:8.0px;color:#383838;">Size</div>
<div class="ab" style="left:551.5px;top:445.5px;width:1px;height:8px;background:#dedede"></div>
<div class="t" style="left:554.8px;top:445.8px;font-size:8.0px;color:#383838;">Priority</div>
<div class="ab" style="left:601.4px;top:445.5px;width:1px;height:8px;background:#dedede"></div>
<div class="t" style="left:604.6px;top:445.8px;font-size:8.0px;color:#383838;">Status</div>
<div class="ab" style="left:704.7px;top:445.5px;width:1px;height:8px;background:#dedede"></div>
<div class="ab" style="left:0;top:545.3px;width:1024px;height:1.2px;background:#bdbdbd"></div>
<div class="ab" style="left:0;top:546.5px;width:1024px;height:36.5px;background:linear-gradient(#e8e8e8,#e2e2e2 40%,#dadada)"></div>
<div class="ab" style="left:0;top:563.5px;width:1024px;height:1px;background:#cfcfcf"></div>
<div class="ab" style="left:0;top:564.5px;width:1024px;height:18.5px;background:linear-gradient(#dedede,#d8d8d8)"></div>
<div class="ab" style="left:3.4px;top:547.6px;width:67.8px;height:14px;background:#f4f4f4;border:1px solid #d2d2d2;border-top:none;border-radius:0 0 2px 2px"></div>
<div class="t" style="left:9.2px;top:550.1px;font-size:9.18px;color:#2d2d2d;font-weight:bold">Queued files</div>
<div class="ab" style="left:71.5px;top:547.6px;width:80px;height:14px;background:#e9e9e9;border:1px solid #d2d2d2;border-top:none;border-radius:0 0 2px 2px"></div>
<div class="t" style="left:76.6px;top:550.1px;font-size:9.4px;color:#3a3a3a;">Failed transfers</div>
<div class="ab" style="left:152.6px;top:547.6px;width:103px;height:14px;background:#e9e9e9;border:1px solid #d2d2d2;border-top:none;border-radius:0 0 2px 2px"></div>
<div class="t" style="left:157.3px;top:550.1px;font-size:9.42px;color:#3a3a3a;">Successful transfers</div>
<svg class="ic" style="left:878px;top:564px" width="146" height="19" viewBox="878 564 146 19">
 <defs>
 <radialGradient id="lg" cx=".45" cy=".35" r=".6"><stop offset="0" stop-color="#5fae62"/><stop offset="1" stop-color="#156b1f"/></radialGradient>
 <radialGradient id="lr" cx=".45" cy=".35" r=".6"><stop offset="0" stop-color="#b8606c"/><stop offset="1" stop-color="#650f1d"/></radialGradient>
 </defs>
 <path d="M884.6 573V571A2.7 2.7 0 0 1 890 571V573" fill="none" stroke="#5a5a5a" stroke-width="1.5"/>
 <rect x="882.2" y="572.6" width="10.2" height="6.4" rx="1" fill="#f4b12a"/>
 <rect x="886.8" y="574.6" width="1.1" height="2.4" fill="#5b420e"/>
 <circle cx="900.3" cy="574" r="5" fill="#eeeeee" stroke="#6d6d6d" stroke-width="1.1"/>
 <circle cx="900.3" cy="574" r="3.4" fill="#fafafa" stroke="#b5b5b5" stroke-width=".6"/>
 <path d="M900 574.5L901.8 571.6" stroke="#555" stroke-width="1"/>
 <path d="M897.3 578Q900.3 575.4 903.3 578Z" fill="#c9c9c9"/>
 <circle cx="1004.6" cy="573.6" r="3.4" fill="url(#lg)"/>
 <circle cx="1014.9" cy="573.6" r="3.4" fill="url(#lr)"/>
</svg>

<div class="t" style="left:913.6px;top:569.6px;font-size:8.02px;color:#3a3a3a;">Queue: empty</div>
<svg class="ic" style="left:0;top:576px" width="4" height="7" viewBox="0 0 4 7"><path d="M0 0Q.6 5.5 4 7H0Z" fill="#0d0d0d"/></svg>
<svg class="ic" style="left:1017px;top:576px" width="7" height="7" viewBox="0 0 7 7"><path d="M7 0V7H0Q5 5 7 0Z" fill="#1c1b6a"/></svg>
</body></html>
